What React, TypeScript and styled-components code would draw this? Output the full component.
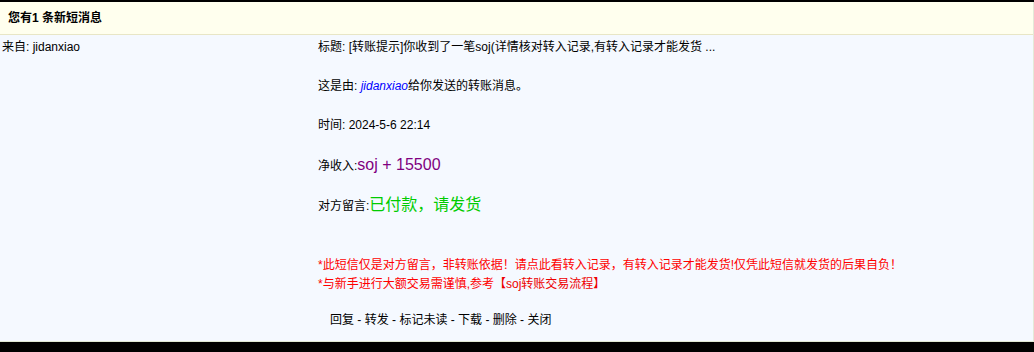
import React from "react";
import styled, { createGlobalStyle } from "styled-components";

const Global = createGlobalStyle`
  html, body { margin: 0; padding: 0; background: #000; }
  body { font-family: "Liberation Sans", Arial, "Noto Sans CJK SC", sans-serif; font-size: 12px; color: #000; }
`;

const Page = styled.div`
  padding-top: 2px;
  background: #000;
`;

const Panel = styled.div`
  width: 1033px;
  border-right: 1px solid #e4ead8;
  background: #f5f9ff;
`;

const Header = styled.div`
  height: 32px;
  line-height: 32px;
  padding-left: 8px;
  background: #ffffee;
  border-bottom: 1px solid #e8e6c6;
  font-weight: bold;
  font-size: 12px;
  color: #000;
`;

const Body = styled.div`
  display: grid;
  grid-template-columns: 316px 1fr;
  height: 306px;
  border-bottom: 1px solid #e0e8d4;
  box-sizing: content-box;
`;

const Cell = styled.div`
  padding: 2px 2px 0 2px;
`;

const Para = styled.div<{ $mt?: number; $lh?: number; $color?: string; $indent?: number }>`
  line-height: ${(p) => p.$lh ?? 20}px;
  margin-top: ${(p) => p.$mt ?? 0}px;
  color: ${(p) => p.$color ?? "#000"};
  padding-left: ${(p) => p.$indent ?? 0}px;
  white-space: nowrap;
`;

const UserLink = styled.a`
  color: #0000ff;
  font-style: italic;
  text-decoration: none;
`;

const Big = styled.span<{ $color: string }>`
  font-size: 16px;
  line-height: 1;
  color: ${(p) => p.$color};
`;

const RedLink = styled.a`
  color: #ee0000;
  text-decoration: none;
`;

const Action = styled.a`
  color: #000;
  text-decoration: none;
`;

export default function App() {
  const actions = ["回复", "转发", "标记未读", "下载", "删除", "关闭"];
  return (
    <>
      <Global />
      <Page>
        <Panel>
          <Header>您有1 条新短消息</Header>
          <Body>
            <Cell>
              <Para>来自: jidanxiao</Para>
            </Cell>
            <Cell>
              <Para>标题: [转账提示]你收到了一笔soj(详情核对转入记录,有转入记录才能发货 ...</Para>
              <Para $mt={19}>
                这是由: <UserLink>jidanxiao</UserLink>给你发送的转账消息。
              </Para>
              <Para $mt={19}>时间: 2024-5-6 22:14</Para>
              <Para $mt={21}>
                净收入:<Big $color="#800080">soj + 15500</Big>
              </Para>
              <Para $mt={20}>
                对方留言:<Big $color="#00cc00">已付款，请发货</Big>
              </Para>
              <Para $mt={40} $lh={19} $color="#ff0000">
                *此短信仅是对方留言，非转账依据！请点此看转入记录，有转入记录才能发货!仅凭此短信就发货的后果自负！
              </Para>
              <Para $lh={19} $color="#ff0000">
                *与新手进行大额交易需谨慎,参考<RedLink>【soj转账交易流程】</RedLink>
              </Para>
              <Para $mt={16} $indent={12}>
                {actions.map((a, i) => (
                  <React.Fragment key={a}>
                    {i > 0 && " - "}
                    <Action>{a}</Action>
                  </React.Fragment>
                ))}
              </Para>
            </Cell>
          </Body>
        </Panel>
      </Page>
    </>
  );
}
